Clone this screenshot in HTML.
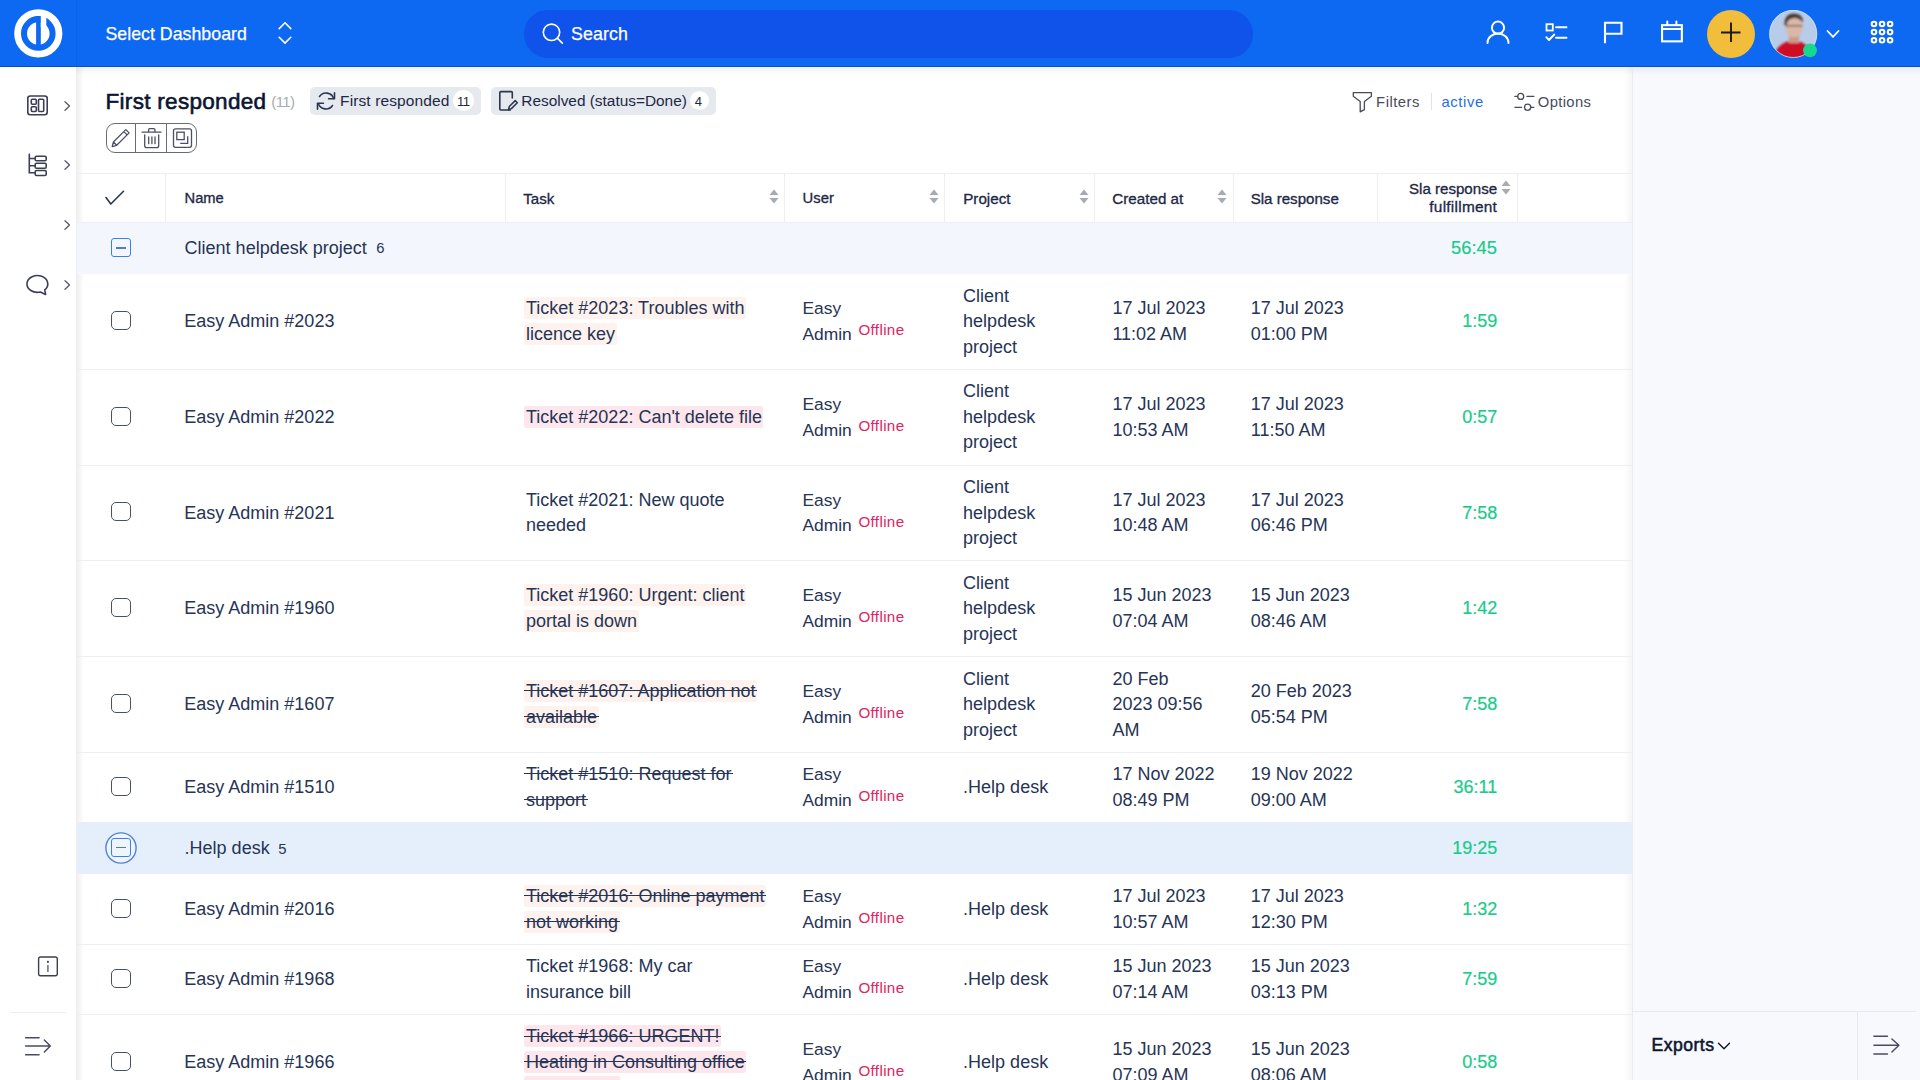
<!DOCTYPE html><html><head><meta charset="utf-8"><title>First responded</title><style>
html,body{margin:0;padding:0;}
body{width:1920px;height:1080px;overflow:hidden;position:relative;background:#fff;font-family:"Liberation Sans", sans-serif;}
.t{position:absolute;white-space:nowrap;}
.b{position:absolute;}
s{text-decoration:line-through;text-decoration-thickness:1px;}
</style></head><body>
<div class="b" style="left:77px;top:67px;width:1556px;height:1013px;background:#fff;"></div><div class="b" style="left:1632px;top:67px;width:288px;height:1013px;background:#f8f9fc;"></div><div class="b" style="left:76px;top:67px;width:8px;height:1013px;background:linear-gradient(90deg,rgba(0,0,0,0.07),rgba(0,0,0,0));"></div><div class="b" style="left:76px;top:67px;width:1844px;height:8px;background:linear-gradient(180deg,rgba(0,0,0,0.05),rgba(0,0,0,0));"></div><div class="b" style="left:1632px;top:67px;width:1px;height:1013px;background:#e9ebef;"></div><div class="b" style="left:1624px;top:67px;width:8px;height:1013px;background:linear-gradient(270deg,rgba(0,0,0,0.04),rgba(0,0,0,0));"></div><div class="b" style="left:0px;top:0px;width:1920px;height:67px;background:#0d68f2;"></div><div class="b" style="left:0px;top:66px;width:1920px;height:1px;background:#0a4fc9;"></div><div class="b" style="left:76px;top:0px;width:1px;height:66px;background:rgba(0,40,140,0.10);"></div><svg class="b" style="left:13px;top:8px;" width="50" height="51" viewBox="0 0 50 51" fill="none"><circle cx="25.3" cy="25.4" r="20.7" stroke="#fff" stroke-width="6.8"/>
<circle cx="25.3" cy="25.5" r="11.3" fill="#fff"/>
<rect x="23.1" y="8" width="4.7" height="34" fill="#0d68f2"/>
<rect x="27.8" y="8" width="5.5" height="11" fill="#fff"/></svg><div class="t" style="left:105.5px;top:24.45px;font-size:17.8px;font-weight:400;color:#fff;line-height:21.36px;-webkit-text-stroke:0.25px #fff;">Select Dashboard</div><svg class="b" style="left:276px;top:20px;" width="18" height="26" viewBox="0 0 18 26" fill="none"><path d="M3.2 8.6 L9 2.8 L14.8 8.6 M3.2 17.3 L9 23.1 L14.8 17.3" stroke="#fff" stroke-width="1.6" stroke-linecap="round" stroke-linejoin="round"/></svg><div class="b" style="left:523.5px;top:9.5px;width:729px;height:48px;background:#0f53ea;border-radius:24px;"></div><svg class="b" style="left:540px;top:21px;" width="26" height="26" viewBox="0 0 26 26" fill="none"><circle cx="11.5" cy="11.3" r="8.2" stroke="#fff" stroke-width="1.6"/><path d="M17.6 17.4 L22.3 22.1" stroke="#fff" stroke-width="1.6" stroke-linecap="round"/></svg><div class="t" style="left:571.0999999999999px;top:24.45px;font-size:17.8px;font-weight:400;color:#fff;line-height:21.36px;letter-spacing:0.1px;-webkit-text-stroke:0.25px #fff;">Search</div><svg class="b" style="left:1484px;top:18px;" width="28" height="28" viewBox="0 0 28 28" fill="none"><circle cx="14" cy="9.7" r="6.1" stroke="#fff" stroke-width="2"/><path d="M3.5 25 A10.5 9.5 0 0 1 24.5 25" stroke="#fff" stroke-width="2" stroke-linecap="round"/></svg><svg class="b" style="left:1542px;top:18px;" width="28" height="28" viewBox="0 0 28 28" fill="none"><rect x="4.5" y="6.2" width="6.3" height="6.3" stroke="#fff" stroke-width="1.8"/><path d="M14 9.2 H24.5 M14 19.8 H24.5" stroke="#fff" stroke-width="1.9" stroke-linecap="round"/><path d="M4.3 19.2 L7 22 L12.3 16.5" stroke="#fff" stroke-width="1.9" stroke-linecap="round" stroke-linejoin="round"/></svg><svg class="b" style="left:1598px;top:18px;" width="28" height="28" viewBox="0 0 28 28" fill="none"><path d="M7 25.3 V4.8 H23.5 V15.7 H7" stroke="#fff" stroke-width="2.1" stroke-linejoin="miter"/></svg><svg class="b" style="left:1657px;top:18px;" width="28" height="28" viewBox="0 0 28 28" fill="none"><rect x="5.05" y="7.15" width="19.8" height="16.2" stroke="#fff" stroke-width="2.1"/><path d="M5 11 H25" stroke="#fff" stroke-width="2"/><path d="M10.3 3.5 V7 M19.4 3.5 V7" stroke="#fff" stroke-width="2" stroke-linecap="round"/></svg><div class="b" style="left:1707px;top:9.8px;width:48px;height:48px;background:#f2bd3a;border-radius:50%;"></div><svg class="b" style="left:1719px;top:21px;" width="24" height="24" viewBox="0 0 24 24" fill="none"><path d="M12 1.5 V21 M2 11.5 H21.5" stroke="#1a1a1a" stroke-width="1.9"/></svg><svg class="b" style="left:1769px;top:9.8px;" width="52" height="52" viewBox="0 0 52 52" fill="none"><defs><clipPath id="av"><circle cx="24.2" cy="23.9" r="23.8"/></clipPath><filter id="bl" x="-20%" y="-20%" width="140%" height="140%"><feGaussianBlur stdDeviation="1.1"/></filter></defs>
<g clip-path="url(#av)"><rect width="52" height="52" fill="#b7cce9"/>
<g filter="url(#bl)">
<path d="M3 52 Q6 36 17 32 L24 30 L32 32 Q42 36 46 52 Z" fill="#cc0f28"/>
<rect x="20" y="25" width="10" height="8" fill="#c99a88"/>
<ellipse cx="25" cy="16.8" rx="8.6" ry="10.8" fill="#dab7a6"/>
<path d="M15.5 15 Q15 4 25 3.6 Q34.5 4 34 13 Q30 7.5 24 8.2 Q18 8.8 17.5 16 Z" fill="#4b3b36"/>
<path d="M17 15.8 H33.5" stroke="#6d5a55" stroke-width="1.3"/>
</g></g>
<circle cx="24.2" cy="23.9" r="23.6" stroke="#d6e4f6" stroke-width="0.8"/>
<circle cx="41" cy="40.3" r="6.9" fill="#17d98e"/></svg><svg class="b" style="left:1825px;top:28px;" width="16" height="12" viewBox="0 0 16 12" fill="none"><path d="M2.5 3 L8 8.8 L13.5 3" stroke="#fff" stroke-width="1.8" stroke-linecap="round" stroke-linejoin="round"/></svg><svg class="b" style="left:1868.6px;top:19.3px;" width="27" height="27" viewBox="0 0 27 27" fill="none"><circle cx="5.00" cy="5.00" r="2.3" stroke="#fff" stroke-width="2"/><circle cx="5.00" cy="13.10" r="2.3" stroke="#fff" stroke-width="2"/><circle cx="5.00" cy="21.20" r="2.3" stroke="#fff" stroke-width="2"/><circle cx="13.05" cy="5.00" r="2.3" stroke="#fff" stroke-width="2"/><circle cx="13.05" cy="13.10" r="2.3" stroke="#fff" stroke-width="2"/><circle cx="13.05" cy="21.20" r="2.3" stroke="#fff" stroke-width="2"/><circle cx="21.10" cy="5.00" r="2.3" stroke="#fff" stroke-width="2"/><circle cx="21.10" cy="13.10" r="2.3" stroke="#fff" stroke-width="2"/><circle cx="21.10" cy="21.20" r="2.3" stroke="#fff" stroke-width="2"/></svg><svg class="b" style="left:24px;top:92px;" width="28" height="28" viewBox="0 0 28 28" fill="none"><rect x="3.8" y="4" width="19.4" height="18.8" rx="2.5" stroke="#3b3f55" stroke-width="1.6"/><rect x="7.3" y="7.3" width="5" height="5" rx="1" stroke="#3b3f55" stroke-width="1.6"/><rect x="7.3" y="14.7" width="5" height="4.8" rx="1" stroke="#3b3f55" stroke-width="1.6"/><rect x="14.5" y="7.3" width="5.2" height="12.2" rx="1" stroke="#3b3f55" stroke-width="1.6"/></svg><svg class="b" style="left:24px;top:150px;" width="28" height="30" viewBox="0 0 28 30" fill="none"><path d="M5.3 4.2 V22.8 H11.2 M5.3 8.5 H11.2 M5.3 15.7 H11.2" stroke="#3b3f55" stroke-width="1.6" stroke-linecap="round"/><rect x="11.2" y="6.3" width="11" height="4.5" rx="1.3" stroke="#3b3f55" stroke-width="1.6"/><rect x="11.2" y="13.3" width="11" height="5" rx="1.3" stroke="#3b3f55" stroke-width="1.6"/><rect x="11.2" y="20.5" width="11" height="5" rx="1.3" stroke="#3b3f55" stroke-width="1.6"/></svg><svg class="b" style="left:24px;top:268px;" width="28" height="30" viewBox="0 0 28 30" fill="none"><path d="M16.3 24 A10.4 8.4 0 1 1 20.7 21.9 L21.6 26.4 Z" stroke="#3b3f55" stroke-width="1.6" stroke-linejoin="round"/></svg><svg class="b" style="left:62px;top:99.5px;" width="10" height="12" viewBox="0 0 10 12" fill="none"><path d="M3 1.8 L7.5 6 L3 10.2" stroke="#555a66" stroke-width="1.3" stroke-linecap="round" stroke-linejoin="round"/></svg><svg class="b" style="left:62px;top:159.1px;" width="10" height="12" viewBox="0 0 10 12" fill="none"><path d="M3 1.8 L7.5 6 L3 10.2" stroke="#555a66" stroke-width="1.3" stroke-linecap="round" stroke-linejoin="round"/></svg><svg class="b" style="left:62px;top:218.7px;" width="10" height="12" viewBox="0 0 10 12" fill="none"><path d="M3 1.8 L7.5 6 L3 10.2" stroke="#555a66" stroke-width="1.3" stroke-linecap="round" stroke-linejoin="round"/></svg><svg class="b" style="left:62px;top:278.6px;" width="10" height="12" viewBox="0 0 10 12" fill="none"><path d="M3 1.8 L7.5 6 L3 10.2" stroke="#555a66" stroke-width="1.3" stroke-linecap="round" stroke-linejoin="round"/></svg><svg class="b" style="left:36px;top:954px;" width="24" height="24" viewBox="0 0 24 24" fill="none"><rect x="2.6" y="3" width="18.7" height="18.7" rx="2" stroke="#3b3f55" stroke-width="1.4"/><circle cx="11.9" cy="7.8" r="1.1" fill="#3b3f55"/><path d="M11.9 11 V18" stroke="#707484" stroke-width="1.6"/></svg><div class="b" style="left:10px;top:1012px;width:56px;height:1px;background:#eceef2;"></div><svg class="b" style="left:22px;top:1034px;" width="32" height="24" viewBox="0 0 32 24" fill="none"><path d="M3.6 3.7 H17.1 M3.6 12 H28.3 M3.6 20.7 H17.1 M22.3 6 L28.3 12 L22.3 18" stroke="#484c62" stroke-width="1.45" stroke-linecap="round" stroke-linejoin="round"/></svg><div class="t" style="left:105.5px;top:87.70px;font-size:22.5px;font-weight:400;color:#0b1532;line-height:27.0px;letter-spacing:0.3px;-webkit-text-stroke:0.6px #0b1532;">First responded</div><div class="t" style="left:271.3px;top:93.10px;font-size:15px;font-weight:400;color:#a7acb6;line-height:18.0px;letter-spacing:-0.6px;">(11)</div><div class="b" style="left:309.5px;top:87px;width:171px;height:28px;background:#e6e9ee;border-radius:5px;"></div><svg class="b" style="left:314px;top:89px;" width="24" height="24" viewBox="0 0 24 24" fill="none"><path d="M19.7 9.5 A8 8 0 0 0 5.5 7.5 M4.3 14.5 A8 8 0 0 0 18.5 16.5" stroke="#2b3550" stroke-width="1.6" stroke-linecap="round"/><path d="M20.5 3.7 V9.8 H14.6 M3.5 20.3 V14.2 H9.4" stroke="#2b3550" stroke-width="1.6" stroke-linecap="round" stroke-linejoin="round"/></svg><div class="t" style="left:340.05px;top:92.13px;font-size:15.5px;font-weight:400;color:#1c2846;line-height:18.6px;letter-spacing:0.12px;">First responded</div><div class="b" style="left:453px;top:90.4px;width:20.5px;height:20.5px;background:#fff;border-radius:50%;"></div><div class="t" style="left:457.0px;top:93.80px;font-size:13px;font-weight:400;color:#1c2846;line-height:15.6px;letter-spacing:-0.4px;">11</div><div class="b" style="left:491.25px;top:87px;width:224.5px;height:28px;background:#e6e9ee;border-radius:5px;"></div><svg class="b" style="left:496px;top:89px;" width="24" height="24" viewBox="0 0 24 24" fill="none"><path d="M14.3 21 H4.8 Q3.8 21 3.8 20 V3.6 Q3.8 2.6 4.8 2.6 H15.3 Q16.3 2.6 16.3 3.6 V9" stroke="#2b3550" stroke-width="1.6" stroke-linecap="round"/><path d="M12.5 20.8 L13.3 17.5 L19.2 11.6 L21.3 13.7 L15.4 19.6 Z" stroke="#2b3550" stroke-width="1.5" stroke-linejoin="round"/></svg><div class="t" style="left:521.3px;top:92.22px;font-size:15.4px;font-weight:400;color:#1c2846;line-height:18.48px;">Resolved (status=Done)</div><div class="b" style="left:690.2px;top:91.1px;width:19px;height:19px;background:#fff;border-radius:50%;"></div><div class="t" style="left:694.8px;top:93.80px;font-size:13px;font-weight:400;color:#1c2846;line-height:15.6px;">4</div><div class="b" style="left:105.7px;top:123px;width:91.7px;height:30.4px;box-sizing:border-box;border:1.3px solid #676a78;border-radius:9px;"></div><div class="b" style="left:135.2px;top:123px;width:1.3px;height:30.4px;background:#676a78;"></div><div class="b" style="left:166.2px;top:123px;width:1.3px;height:30.4px;background:#676a78;"></div><svg class="b" style="left:108px;top:125px;" width="26" height="26" viewBox="0 0 26 26" fill="none"><path d="M4.2 21.6 L5.4 17 L17.8 4.6 L21.1 7.9 L8.7 20.3 Z M5.4 17 L8.7 20.3 M15.8 6.6 L19.1 9.9" stroke="#4d5062" stroke-width="1.3" stroke-linejoin="round"/></svg><svg class="b" style="left:139px;top:125px;" width="26" height="26" viewBox="0 0 26 26" fill="none"><path d="M3.1 7.2 H22 M9.6 7.2 V4.6 Q9.6 3.6 10.6 3.6 H14.9 Q15.9 3.6 15.9 4.6 V7.2 M5.7 9.8 V20.4 Q5.7 22.6 7.9 22.6 H17.5 Q19.7 22.6 19.7 20.4 V9.8 M9.7 12 V18.7 M12.9 12 V18.7 M16 12 V18.7" stroke="#4d5062" stroke-width="1.3" stroke-linecap="round"/></svg><svg class="b" style="left:170px;top:125px;" width="26" height="26" viewBox="0 0 26 26" fill="none"><rect x="3.5" y="3.9" width="18" height="18.4" rx="2" stroke="#4d5062" stroke-width="1.3"/><rect x="6.8" y="7.2" width="7.4" height="7.4" stroke="#4d5062" stroke-width="1.3"/><path d="M17.7 11.2 V18.4 H10.2" stroke="#4d5062" stroke-width="1.3"/></svg><svg class="b" style="left:1350px;top:89px;" width="26" height="26" viewBox="0 0 26 26" fill="none"><path d="M3.3 3.6 H21.4 V7.3 L14.4 12.5 V20.6 L10.2 22.8 V12.5 L3.3 7.3 Z" stroke="#474c5c" stroke-width="1.3" stroke-linejoin="round"/></svg><div class="t" style="left:1376.1px;top:93.59px;font-size:14.8px;font-weight:400;color:#474c5c;line-height:17.76px;letter-spacing:0.5px;">Filters</div><div class="b" style="left:1431px;top:93.4px;width:1px;height:16.2px;background:#dfe2e8;"></div><div class="t" style="left:1441.5px;top:93.59px;font-size:14.8px;font-weight:400;color:#1e6fe0;line-height:17.76px;letter-spacing:0.6px;">active</div><svg class="b" style="left:1512px;top:90px;" width="26" height="26" viewBox="0 0 26 26" fill="none"><circle cx="8.7" cy="6.4" r="3" stroke="#474c5c" stroke-width="1.3"/><circle cx="15.6" cy="17.3" r="3.1" stroke="#474c5c" stroke-width="1.3"/><path d="M2.9 6.4 H5.7 M15 6.4 H21.8 M2.9 17.3 H9.7 M18.7 17.3 H21.8" stroke="#474c5c" stroke-width="1.3" stroke-linecap="round"/></svg><div class="t" style="left:1537.8px;top:93.59px;font-size:14.8px;font-weight:400;color:#474c5c;line-height:17.76px;letter-spacing:0.35px;">Options</div><div class="b" style="left:77px;top:173px;width:1555px;height:1px;background:#eceef2;"></div><div class="b" style="left:77px;top:222px;width:1555px;height:1px;background:#eceef2;"></div><div class="b" style="left:165px;top:174px;width:1px;height:48px;background:#eceef2;"></div><div class="b" style="left:504.5px;top:174px;width:1px;height:48px;background:#eceef2;"></div><div class="b" style="left:783.5px;top:174px;width:1px;height:48px;background:#eceef2;"></div><div class="b" style="left:944.2px;top:174px;width:1px;height:48px;background:#eceef2;"></div><div class="b" style="left:1094.2px;top:174px;width:1px;height:48px;background:#eceef2;"></div><div class="b" style="left:1232.7px;top:174px;width:1px;height:48px;background:#eceef2;"></div><div class="b" style="left:1377.2px;top:174px;width:1px;height:48px;background:#eceef2;"></div><div class="b" style="left:1516.7px;top:174px;width:1px;height:48px;background:#eceef2;"></div><svg class="b" style="left:103px;top:187px;" width="24" height="20" viewBox="0 0 24 20" fill="none"><path d="M3 10.5 L7.8 17 L20.5 4.3" stroke="#2b3550" stroke-width="1.6" stroke-linecap="round" stroke-linejoin="round"/></svg><div class="t" style="left:184.60000000000002px;top:190.19px;font-size:14.7px;font-weight:400;color:#1c2846;line-height:17.64px;-webkit-text-stroke:0.32px #1c2846;">Name</div><div class="t" style="left:523.3px;top:189.81px;font-size:15.1px;font-weight:400;color:#1c2846;line-height:18.12px;-webkit-text-stroke:0.32px #1c2846;">Task</div><div class="t" style="left:802.5999999999999px;top:190.09px;font-size:14.8px;font-weight:400;color:#1c2846;line-height:17.76px;-webkit-text-stroke:0.32px #1c2846;">User</div><div class="t" style="left:963.1999999999999px;top:189.71px;font-size:15.2px;font-weight:400;color:#1c2846;line-height:18.24px;-webkit-text-stroke:0.32px #1c2846;">Project</div><div class="t" style="left:1112.3px;top:189.71px;font-size:15.2px;font-weight:400;color:#1c2846;line-height:18.24px;-webkit-text-stroke:0.32px #1c2846;">Created at</div><div class="t" style="left:1250.7px;top:189.81px;font-size:15.1px;font-weight:400;color:#1c2846;line-height:18.12px;-webkit-text-stroke:0.32px #1c2846;">Sla response</div><div class="t" style="right:422.9000000000001px;top:180.31px;font-size:15.1px;font-weight:400;color:#1c2846;line-height:18.12px;text-align:right;-webkit-text-stroke:0.32px #1c2846;">Sla response</div><div class="t" style="right:422.9000000000001px;top:197.92px;font-size:15.4px;font-weight:400;color:#1c2846;line-height:18.48px;text-align:right;letter-spacing:0.25px;-webkit-text-stroke:0.32px #1c2846;">fulfillment</div><svg class="b" style="left:767.8px;top:188.5px;" width="12" height="16" viewBox="0 0 12 16" fill="none"><path d="M1.5 6 L6 0.5 L10.5 6 Z M1.5 9 L6 14.5 L10.5 9 Z" fill="#a6abb3"/></svg><svg class="b" style="left:927.75px;top:188.5px;" width="12" height="16" viewBox="0 0 12 16" fill="none"><path d="M1.5 6 L6 0.5 L10.5 6 Z M1.5 9 L6 14.5 L10.5 9 Z" fill="#a6abb3"/></svg><svg class="b" style="left:1077.75px;top:188.5px;" width="12" height="16" viewBox="0 0 12 16" fill="none"><path d="M1.5 6 L6 0.5 L10.5 6 Z M1.5 9 L6 14.5 L10.5 9 Z" fill="#a6abb3"/></svg><svg class="b" style="left:1216.3px;top:188.5px;" width="12" height="16" viewBox="0 0 12 16" fill="none"><path d="M1.5 6 L6 0.5 L10.5 6 Z M1.5 9 L6 14.5 L10.5 9 Z" fill="#a6abb3"/></svg><svg class="b" style="left:1500px;top:180px;" width="12" height="16" viewBox="0 0 12 16" fill="none"><path d="M1.5 6 L6 0.5 L10.5 6 Z M1.5 9 L6 14.5 L10.5 9 Z" fill="#a6abb3"/></svg><div class="b" style="left:77px;top:222.5px;width:1555px;height:51.30000000000001px;background:#f3f7fd;"></div><div class="b" style="left:111.4px;top:238.05px;width:19.2px;height:19.2px;box-sizing:border-box;border:1.9px solid #3b80e4;border-radius:3px;"></div><div class="b" style="left:116.2px;top:247.25px;width:9.6px;height:1.3px;background:#4a7cc8;"></div><div class="t" style="left:184.60000000000002px;top:236.20px;font-size:18px;font-weight:400;color:#263455;line-height:25.5px;">Client helpdesk project</div><div class="t" style="left:376.3px;top:239.59px;font-size:14.8px;font-weight:400;color:#263455;line-height:17.76px;">6</div><div class="t" style="right:423.20000000000005px;top:235.20px;font-size:18.3px;font-weight:400;color:#18cb89;line-height:25.5px;text-align:right;-webkit-text-stroke:0.2px #18cb89;">56:45</div><div class="b" style="left:77px;top:822px;width:1555px;height:52px;background:#e5effc;"></div><svg class="b" style="left:103.8px;top:830.5px;" width="34" height="34" viewBox="0 0 34 34" fill="none"><circle cx="17" cy="17" r="15.1" fill="rgba(255,255,255,0.4)" stroke="#4f80dc" stroke-width="1.4"/></svg><div class="b" style="left:111.4px;top:837.9px;width:19.2px;height:19.2px;box-sizing:border-box;border:1.9px solid #3b80e4;border-radius:3px;"></div><div class="b" style="left:116.2px;top:847.1px;width:9.6px;height:1.3px;background:#4a7cc8;"></div><div class="t" style="left:184.60000000000002px;top:836.05px;font-size:18px;font-weight:400;color:#263455;line-height:25.5px;">.Help desk</div><div class="t" style="left:278.3px;top:841.39px;font-size:14.8px;font-weight:400;color:#263455;line-height:17.76px;">5</div><div class="t" style="right:422.70000000000005px;top:836.05px;font-size:18px;font-weight:400;color:#18cb89;line-height:25.5px;text-align:right;-webkit-text-stroke:0.2px #18cb89;">19:25</div><div class="b" style="left:111.3px;top:310.75px;width:19.3px;height:19.3px;box-sizing:border-box;border:1.7px solid #46516b;border-radius:5px;"></div><div class="t" style="left:184.3px;top:309.20px;font-size:18px;font-weight:400;color:#263455;line-height:25.5px;">Easy Admin #2023</div><div class="t" style="left:526px;top:296.45px;font-size:18px;line-height:25.5px;color:#263455;"><span style="background:#fdf2ed;border-radius:2px;padding:1.1px 1.5px 0.9px 2.5px;margin-left:-2.5px;">Ticket #2023: Troubles with</span><br><span style="background:#fdf2ed;border-radius:2px;padding:1.1px 1.5px 0.9px 2.5px;margin-left:-2.5px;">licence key</span></div><div class="t" style="left:802.5px;top:296.45px;font-size:17.4px;font-weight:400;color:#263455;line-height:25.5px;">Easy</div><div class="t" style="left:802.5px;top:321.95px;font-size:17.4px;font-weight:400;color:#263455;line-height:25.5px;">Admin</div><div class="t" style="left:858.4px;top:321.34px;font-size:15.2px;font-weight:400;color:#e0245e;line-height:18.24px;letter-spacing:0.35px;">Offline</div><div class="t" style="left:963.0999999999999px;top:283.70px;font-size:18px;font-weight:400;color:#263455;line-height:25.5px;">Client</div><div class="t" style="left:963.0999999999999px;top:309.20px;font-size:18px;font-weight:400;color:#263455;line-height:25.5px;">helpdesk</div><div class="t" style="left:963.0999999999999px;top:334.70px;font-size:18px;font-weight:400;color:#263455;line-height:25.5px;">project</div><div class="t" style="left:1112.3999999999999px;top:296.45px;font-size:18px;font-weight:400;color:#263455;line-height:25.5px;">17 Jul 2023</div><div class="t" style="left:1112.3999999999999px;top:321.95px;font-size:18px;font-weight:400;color:#263455;line-height:25.5px;">11:02 AM</div><div class="t" style="left:1250.8px;top:296.45px;font-size:18px;font-weight:400;color:#263455;line-height:25.5px;">17 Jul 2023</div><div class="t" style="left:1250.8px;top:321.95px;font-size:18px;font-weight:400;color:#263455;line-height:25.5px;">01:00 PM</div><div class="t" style="right:422.70000000000005px;top:309.20px;font-size:18px;font-weight:400;color:#18cb89;line-height:25.5px;text-align:right;-webkit-text-stroke:0.2px #18cb89;">1:59</div><div class="b" style="left:77px;top:369px;width:1555px;height:1px;background:#eceef2;"></div><div class="b" style="left:111.3px;top:406.5px;width:19.3px;height:19.3px;box-sizing:border-box;border:1.7px solid #46516b;border-radius:5px;"></div><div class="t" style="left:184.3px;top:404.95px;font-size:18px;font-weight:400;color:#263455;line-height:25.5px;">Easy Admin #2022</div><div class="t" style="left:526px;top:404.95px;font-size:18px;line-height:25.5px;color:#263455;"><span style="background:#fde6ec;border-radius:2px;padding:1.1px 1.5px 0.9px 2.5px;margin-left:-2.5px;">Ticket #2022: Can't delete file</span></div><div class="t" style="left:802.5px;top:392.20px;font-size:17.4px;font-weight:400;color:#263455;line-height:25.5px;">Easy</div><div class="t" style="left:802.5px;top:417.70px;font-size:17.4px;font-weight:400;color:#263455;line-height:25.5px;">Admin</div><div class="t" style="left:858.4px;top:417.09px;font-size:15.2px;font-weight:400;color:#e0245e;line-height:18.24px;letter-spacing:0.35px;">Offline</div><div class="t" style="left:963.0999999999999px;top:379.45px;font-size:18px;font-weight:400;color:#263455;line-height:25.5px;">Client</div><div class="t" style="left:963.0999999999999px;top:404.95px;font-size:18px;font-weight:400;color:#263455;line-height:25.5px;">helpdesk</div><div class="t" style="left:963.0999999999999px;top:430.45px;font-size:18px;font-weight:400;color:#263455;line-height:25.5px;">project</div><div class="t" style="left:1112.3999999999999px;top:392.20px;font-size:18px;font-weight:400;color:#263455;line-height:25.5px;">17 Jul 2023</div><div class="t" style="left:1112.3999999999999px;top:417.70px;font-size:18px;font-weight:400;color:#263455;line-height:25.5px;">10:53 AM</div><div class="t" style="left:1250.8px;top:392.20px;font-size:18px;font-weight:400;color:#263455;line-height:25.5px;">17 Jul 2023</div><div class="t" style="left:1250.8px;top:417.70px;font-size:18px;font-weight:400;color:#263455;line-height:25.5px;">11:50 AM</div><div class="t" style="right:422.70000000000005px;top:404.95px;font-size:18px;font-weight:400;color:#18cb89;line-height:25.5px;text-align:right;-webkit-text-stroke:0.2px #18cb89;">0:57</div><div class="b" style="left:77px;top:464.8px;width:1555px;height:1px;background:#eceef2;"></div><div class="b" style="left:111.3px;top:502.1px;width:19.3px;height:19.3px;box-sizing:border-box;border:1.7px solid #46516b;border-radius:5px;"></div><div class="t" style="left:184.3px;top:500.55px;font-size:18px;font-weight:400;color:#263455;line-height:25.5px;">Easy Admin #2021</div><div class="t" style="left:526px;top:487.80px;font-size:18px;line-height:25.5px;color:#263455;"><span style="border-radius:2px;padding:1.1px 1.5px 0.9px 2.5px;margin-left:-2.5px;">Ticket #2021: New quote</span><br><span style="border-radius:2px;padding:1.1px 1.5px 0.9px 2.5px;margin-left:-2.5px;">needed</span></div><div class="t" style="left:802.5px;top:487.80px;font-size:17.4px;font-weight:400;color:#263455;line-height:25.5px;">Easy</div><div class="t" style="left:802.5px;top:513.30px;font-size:17.4px;font-weight:400;color:#263455;line-height:25.5px;">Admin</div><div class="t" style="left:858.4px;top:512.69px;font-size:15.2px;font-weight:400;color:#e0245e;line-height:18.24px;letter-spacing:0.35px;">Offline</div><div class="t" style="left:963.0999999999999px;top:475.05px;font-size:18px;font-weight:400;color:#263455;line-height:25.5px;">Client</div><div class="t" style="left:963.0999999999999px;top:500.55px;font-size:18px;font-weight:400;color:#263455;line-height:25.5px;">helpdesk</div><div class="t" style="left:963.0999999999999px;top:526.05px;font-size:18px;font-weight:400;color:#263455;line-height:25.5px;">project</div><div class="t" style="left:1112.3999999999999px;top:487.80px;font-size:18px;font-weight:400;color:#263455;line-height:25.5px;">17 Jul 2023</div><div class="t" style="left:1112.3999999999999px;top:513.30px;font-size:18px;font-weight:400;color:#263455;line-height:25.5px;">10:48 AM</div><div class="t" style="left:1250.8px;top:487.80px;font-size:18px;font-weight:400;color:#263455;line-height:25.5px;">17 Jul 2023</div><div class="t" style="left:1250.8px;top:513.30px;font-size:18px;font-weight:400;color:#263455;line-height:25.5px;">06:46 PM</div><div class="t" style="right:422.70000000000005px;top:500.55px;font-size:18px;font-weight:400;color:#18cb89;line-height:25.5px;text-align:right;-webkit-text-stroke:0.2px #18cb89;">7:58</div><div class="b" style="left:77px;top:560.2px;width:1555px;height:1px;background:#eceef2;"></div><div class="b" style="left:111.3px;top:597.65px;width:19.3px;height:19.3px;box-sizing:border-box;border:1.7px solid #46516b;border-radius:5px;"></div><div class="t" style="left:184.3px;top:596.10px;font-size:18px;font-weight:400;color:#263455;line-height:25.5px;">Easy Admin #1960</div><div class="t" style="left:526px;top:583.35px;font-size:18px;line-height:25.5px;color:#263455;"><span style="background:#fdf2ed;border-radius:2px;padding:1.1px 1.5px 0.9px 2.5px;margin-left:-2.5px;">Ticket #1960: Urgent: client</span><br><span style="background:#fdf2ed;border-radius:2px;padding:1.1px 1.5px 0.9px 2.5px;margin-left:-2.5px;">portal is down</span></div><div class="t" style="left:802.5px;top:583.35px;font-size:17.4px;font-weight:400;color:#263455;line-height:25.5px;">Easy</div><div class="t" style="left:802.5px;top:608.85px;font-size:17.4px;font-weight:400;color:#263455;line-height:25.5px;">Admin</div><div class="t" style="left:858.4px;top:608.24px;font-size:15.2px;font-weight:400;color:#e0245e;line-height:18.24px;letter-spacing:0.35px;">Offline</div><div class="t" style="left:963.0999999999999px;top:570.60px;font-size:18px;font-weight:400;color:#263455;line-height:25.5px;">Client</div><div class="t" style="left:963.0999999999999px;top:596.10px;font-size:18px;font-weight:400;color:#263455;line-height:25.5px;">helpdesk</div><div class="t" style="left:963.0999999999999px;top:621.60px;font-size:18px;font-weight:400;color:#263455;line-height:25.5px;">project</div><div class="t" style="left:1112.3999999999999px;top:583.35px;font-size:18px;font-weight:400;color:#263455;line-height:25.5px;">15 Jun 2023</div><div class="t" style="left:1112.3999999999999px;top:608.85px;font-size:18px;font-weight:400;color:#263455;line-height:25.5px;">07:04 AM</div><div class="t" style="left:1250.8px;top:583.35px;font-size:18px;font-weight:400;color:#263455;line-height:25.5px;">15 Jun 2023</div><div class="t" style="left:1250.8px;top:608.85px;font-size:18px;font-weight:400;color:#263455;line-height:25.5px;">08:46 AM</div><div class="t" style="right:422.70000000000005px;top:596.10px;font-size:18px;font-weight:400;color:#18cb89;line-height:25.5px;text-align:right;-webkit-text-stroke:0.2px #18cb89;">1:42</div><div class="b" style="left:77px;top:655.9px;width:1555px;height:1px;background:#eceef2;"></div><div class="b" style="left:111.3px;top:693.65px;width:19.3px;height:19.3px;box-sizing:border-box;border:1.7px solid #46516b;border-radius:5px;"></div><div class="t" style="left:184.3px;top:692.10px;font-size:18px;font-weight:400;color:#263455;line-height:25.5px;">Easy Admin #1607</div><div class="t" style="left:526px;top:679.35px;font-size:18px;line-height:25.5px;color:#263455;"><span style="background:linear-gradient(#263455,#263455) 0 10.1px / 100% 1.15px no-repeat,#fdf2ed;border-radius:2px;padding:1.1px 1.5px 0.9px 2.5px;margin-left:-2.5px;">Ticket #1607: Application not</span><br><span style="background:linear-gradient(#263455,#263455) 0 10.1px / 100% 1.15px no-repeat,#fdf2ed;border-radius:2px;padding:1.1px 1.5px 0.9px 2.5px;margin-left:-2.5px;">available</span></div><div class="t" style="left:802.5px;top:679.35px;font-size:17.4px;font-weight:400;color:#263455;line-height:25.5px;">Easy</div><div class="t" style="left:802.5px;top:704.85px;font-size:17.4px;font-weight:400;color:#263455;line-height:25.5px;">Admin</div><div class="t" style="left:858.4px;top:704.24px;font-size:15.2px;font-weight:400;color:#e0245e;line-height:18.24px;letter-spacing:0.35px;">Offline</div><div class="t" style="left:963.0999999999999px;top:666.60px;font-size:18px;font-weight:400;color:#263455;line-height:25.5px;">Client</div><div class="t" style="left:963.0999999999999px;top:692.10px;font-size:18px;font-weight:400;color:#263455;line-height:25.5px;">helpdesk</div><div class="t" style="left:963.0999999999999px;top:717.60px;font-size:18px;font-weight:400;color:#263455;line-height:25.5px;">project</div><div class="t" style="left:1112.3999999999999px;top:666.60px;font-size:18px;font-weight:400;color:#263455;line-height:25.5px;">20 Feb</div><div class="t" style="left:1112.3999999999999px;top:692.10px;font-size:18px;font-weight:400;color:#263455;line-height:25.5px;">2023 09:56</div><div class="t" style="left:1112.3999999999999px;top:717.60px;font-size:18px;font-weight:400;color:#263455;line-height:25.5px;">AM</div><div class="t" style="left:1250.8px;top:679.35px;font-size:18px;font-weight:400;color:#263455;line-height:25.5px;">20 Feb 2023</div><div class="t" style="left:1250.8px;top:704.85px;font-size:18px;font-weight:400;color:#263455;line-height:25.5px;">05:54 PM</div><div class="t" style="right:422.70000000000005px;top:692.10px;font-size:18px;font-weight:400;color:#18cb89;line-height:25.5px;text-align:right;-webkit-text-stroke:0.2px #18cb89;">7:58</div><div class="b" style="left:77px;top:752.2px;width:1555px;height:1px;background:#eceef2;"></div><div class="b" style="left:111.3px;top:776.7px;width:19.3px;height:19.3px;box-sizing:border-box;border:1.7px solid #46516b;border-radius:5px;"></div><div class="t" style="left:184.3px;top:775.15px;font-size:18px;font-weight:400;color:#263455;line-height:25.5px;">Easy Admin #1510</div><div class="t" style="left:526px;top:762.40px;font-size:18px;line-height:25.5px;color:#263455;"><span style="background:linear-gradient(#263455,#263455) 0 10.1px / 100% 1.15px no-repeat;border-radius:2px;padding:1.1px 1.5px 0.9px 2.5px;margin-left:-2.5px;">Ticket #1510: Request for</span><br><span style="background:linear-gradient(#263455,#263455) 0 10.1px / 100% 1.15px no-repeat;border-radius:2px;padding:1.1px 1.5px 0.9px 2.5px;margin-left:-2.5px;">support</span></div><div class="t" style="left:802.5px;top:762.40px;font-size:17.4px;font-weight:400;color:#263455;line-height:25.5px;">Easy</div><div class="t" style="left:802.5px;top:787.90px;font-size:17.4px;font-weight:400;color:#263455;line-height:25.5px;">Admin</div><div class="t" style="left:858.4px;top:787.29px;font-size:15.2px;font-weight:400;color:#e0245e;line-height:18.24px;letter-spacing:0.35px;">Offline</div><div class="t" style="left:963.0999999999999px;top:775.15px;font-size:18px;font-weight:400;color:#263455;line-height:25.5px;">.Help desk</div><div class="t" style="left:1112.3999999999999px;top:762.40px;font-size:18px;font-weight:400;color:#263455;line-height:25.5px;">17 Nov 2022</div><div class="t" style="left:1112.3999999999999px;top:787.90px;font-size:18px;font-weight:400;color:#263455;line-height:25.5px;">08:49 PM</div><div class="t" style="left:1250.8px;top:762.40px;font-size:18px;font-weight:400;color:#263455;line-height:25.5px;">19 Nov 2022</div><div class="t" style="left:1250.8px;top:787.90px;font-size:18px;font-weight:400;color:#263455;line-height:25.5px;">09:00 AM</div><div class="t" style="right:422.70000000000005px;top:775.15px;font-size:18px;font-weight:400;color:#18cb89;line-height:25.5px;text-align:right;-webkit-text-stroke:0.2px #18cb89;">36:11</div><div class="b" style="left:111.3px;top:898.65px;width:19.3px;height:19.3px;box-sizing:border-box;border:1.7px solid #46516b;border-radius:5px;"></div><div class="t" style="left:184.3px;top:897.10px;font-size:18px;font-weight:400;color:#263455;line-height:25.5px;">Easy Admin #2016</div><div class="t" style="left:526px;top:884.35px;font-size:18px;line-height:25.5px;color:#263455;"><span style="background:linear-gradient(#263455,#263455) 0 10.1px / 100% 1.15px no-repeat,#fdf2ed;border-radius:2px;padding:1.1px 1.5px 0.9px 2.5px;margin-left:-2.5px;">Ticket #2016: Online payment</span><br><span style="background:linear-gradient(#263455,#263455) 0 10.1px / 100% 1.15px no-repeat,#fdf2ed;border-radius:2px;padding:1.1px 1.5px 0.9px 2.5px;margin-left:-2.5px;">not working</span></div><div class="t" style="left:802.5px;top:884.35px;font-size:17.4px;font-weight:400;color:#263455;line-height:25.5px;">Easy</div><div class="t" style="left:802.5px;top:909.85px;font-size:17.4px;font-weight:400;color:#263455;line-height:25.5px;">Admin</div><div class="t" style="left:858.4px;top:909.24px;font-size:15.2px;font-weight:400;color:#e0245e;line-height:18.24px;letter-spacing:0.35px;">Offline</div><div class="t" style="left:963.0999999999999px;top:897.10px;font-size:18px;font-weight:400;color:#263455;line-height:25.5px;">.Help desk</div><div class="t" style="left:1112.3999999999999px;top:884.35px;font-size:18px;font-weight:400;color:#263455;line-height:25.5px;">17 Jul 2023</div><div class="t" style="left:1112.3999999999999px;top:909.85px;font-size:18px;font-weight:400;color:#263455;line-height:25.5px;">10:57 AM</div><div class="t" style="left:1250.8px;top:884.35px;font-size:18px;font-weight:400;color:#263455;line-height:25.5px;">17 Jul 2023</div><div class="t" style="left:1250.8px;top:909.85px;font-size:18px;font-weight:400;color:#263455;line-height:25.5px;">12:30 PM</div><div class="t" style="right:422.70000000000005px;top:897.10px;font-size:18px;font-weight:400;color:#18cb89;line-height:25.5px;text-align:right;-webkit-text-stroke:0.2px #18cb89;">1:32</div><div class="b" style="left:77px;top:944.1px;width:1555px;height:1px;background:#eceef2;"></div><div class="b" style="left:111.3px;top:968.65px;width:19.3px;height:19.3px;box-sizing:border-box;border:1.7px solid #46516b;border-radius:5px;"></div><div class="t" style="left:184.3px;top:967.10px;font-size:18px;font-weight:400;color:#263455;line-height:25.5px;">Easy Admin #1968</div><div class="t" style="left:526px;top:954.35px;font-size:18px;line-height:25.5px;color:#263455;"><span style="border-radius:2px;padding:1.1px 1.5px 0.9px 2.5px;margin-left:-2.5px;">Ticket #1968: My car</span><br><span style="border-radius:2px;padding:1.1px 1.5px 0.9px 2.5px;margin-left:-2.5px;">insurance bill</span></div><div class="t" style="left:802.5px;top:954.35px;font-size:17.4px;font-weight:400;color:#263455;line-height:25.5px;">Easy</div><div class="t" style="left:802.5px;top:979.85px;font-size:17.4px;font-weight:400;color:#263455;line-height:25.5px;">Admin</div><div class="t" style="left:858.4px;top:979.24px;font-size:15.2px;font-weight:400;color:#e0245e;line-height:18.24px;letter-spacing:0.35px;">Offline</div><div class="t" style="left:963.0999999999999px;top:967.10px;font-size:18px;font-weight:400;color:#263455;line-height:25.5px;">.Help desk</div><div class="t" style="left:1112.3999999999999px;top:954.35px;font-size:18px;font-weight:400;color:#263455;line-height:25.5px;">15 Jun 2023</div><div class="t" style="left:1112.3999999999999px;top:979.85px;font-size:18px;font-weight:400;color:#263455;line-height:25.5px;">07:14 AM</div><div class="t" style="left:1250.8px;top:954.35px;font-size:18px;font-weight:400;color:#263455;line-height:25.5px;">15 Jun 2023</div><div class="t" style="left:1250.8px;top:979.85px;font-size:18px;font-weight:400;color:#263455;line-height:25.5px;">03:13 PM</div><div class="t" style="right:422.70000000000005px;top:967.10px;font-size:18px;font-weight:400;color:#18cb89;line-height:25.5px;text-align:right;-webkit-text-stroke:0.2px #18cb89;">7:59</div><div class="b" style="left:77px;top:1014px;width:1555px;height:1px;background:#eceef2;"></div><div class="b" style="left:111.3px;top:1051.6px;width:19.3px;height:19.3px;box-sizing:border-box;border:1.7px solid #46516b;border-radius:5px;"></div><div class="t" style="left:184.3px;top:1050.05px;font-size:18px;font-weight:400;color:#263455;line-height:25.5px;">Easy Admin #1966</div><div class="t" style="left:526px;top:1024.55px;font-size:18px;line-height:25.5px;color:#263455;"><span style="background:linear-gradient(#263455,#263455) 0 10.1px / 100% 1.15px no-repeat,#fde6ec;border-radius:2px;padding:1.1px 1.5px 0.9px 2.5px;margin-left:-2.5px;">Ticket #1966: URGENT!</span><br><span style="background:linear-gradient(#263455,#263455) 0 10.1px / 100% 1.15px no-repeat,#fde6ec;border-radius:2px;padding:1.1px 1.5px 0.9px 2.5px;margin-left:-2.5px;">Heating in Consulting office</span><br><span style="background:linear-gradient(#263455,#263455) 0 10.1px / 100% 1.15px no-repeat,#fde6ec;border-radius:2px;padding:1.1px 1.5px 0.9px 2.5px;margin-left:-2.5px;">not working</span></div><div class="t" style="left:802.5px;top:1037.30px;font-size:17.4px;font-weight:400;color:#263455;line-height:25.5px;">Easy</div><div class="t" style="left:802.5px;top:1062.80px;font-size:17.4px;font-weight:400;color:#263455;line-height:25.5px;">Admin</div><div class="t" style="left:858.4px;top:1062.19px;font-size:15.2px;font-weight:400;color:#e0245e;line-height:18.24px;letter-spacing:0.35px;">Offline</div><div class="t" style="left:963.0999999999999px;top:1050.05px;font-size:18px;font-weight:400;color:#263455;line-height:25.5px;">.Help desk</div><div class="t" style="left:1112.3999999999999px;top:1037.30px;font-size:18px;font-weight:400;color:#263455;line-height:25.5px;">15 Jun 2023</div><div class="t" style="left:1112.3999999999999px;top:1062.80px;font-size:18px;font-weight:400;color:#263455;line-height:25.5px;">07:09 AM</div><div class="t" style="left:1250.8px;top:1037.30px;font-size:18px;font-weight:400;color:#263455;line-height:25.5px;">15 Jun 2023</div><div class="t" style="left:1250.8px;top:1062.80px;font-size:18px;font-weight:400;color:#263455;line-height:25.5px;">08:06 AM</div><div class="t" style="right:422.70000000000005px;top:1050.05px;font-size:18px;font-weight:400;color:#18cb89;line-height:25.5px;text-align:right;-webkit-text-stroke:0.2px #18cb89;">0:58</div><div class="b" style="left:77px;top:752.2px;width:1555px;height:1px;background:#eceef2;"></div><div class="b" style="left:1632.5px;top:1011px;width:283px;height:1px;background:#e6e9ef;"></div><div class="b" style="left:1857px;top:1012px;width:1px;height:68px;background:#e6e9ef;"></div><div class="t" style="left:1651.6px;top:1034.64px;font-size:17.6px;font-weight:400;color:#0b1532;line-height:21.12px;letter-spacing:0.45px;-webkit-text-stroke:0.55px #0b1532;">Exports</div><svg class="b" style="left:1716px;top:1040px;" width="16" height="12" viewBox="0 0 16 12" fill="none"><path d="M2.5 3.2 L8 8.8 L13.5 3.2" stroke="#0b1532" stroke-width="1.4" stroke-linecap="round" stroke-linejoin="round"/></svg><svg class="b" style="left:1870px;top:1033px;" width="32" height="24" viewBox="0 0 32 24" fill="none"><path d="M3.9 3.25 H17.5 M3.9 12.3 H28.9 M3.9 20.9 H17.5 M21.9 6 L28.9 12.3 L21.9 19" stroke="#484c62" stroke-width="1.45" stroke-linecap="round" stroke-linejoin="round"/></svg></body></html>
